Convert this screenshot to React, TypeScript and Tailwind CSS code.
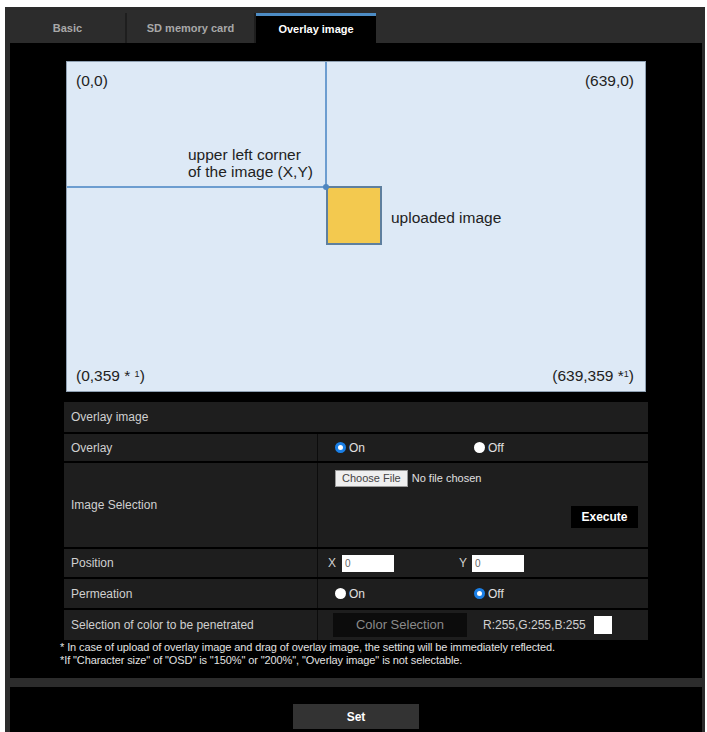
import React from 'react';

const font = { fontFamily: '"Liberation Sans", Arial, sans-serif' };

function Radio({ checked, label }: { checked: boolean; label: string }) {
  return (
    <span className="flex items-center gap-[3px] text-[12px] text-[#e0e0e0]">
      {checked ? (
        <span className="w-[11px] h-[11px] rounded-full bg-white border-[3px] border-[#1a7fe6]" />
      ) : (
        <span className="w-[11px] h-[11px] rounded-full bg-white" />
      )}
      <span>{label}</span>
    </span>
  );
}

function Row({ label, h, children }: { label: string; h: string; children: React.ReactNode }) {
  return (
    <div className={`flex ${h} border-t-2 border-black`}>
      <div className="w-[253px] flex items-center pl-[7px] text-[12px] text-[#d0d0d0]">{label}</div>
      <div className="flex-1 border-l border-[#0c0c0c] relative">{children}</div>
    </div>
  );
}

function Diagram() {
  return (
    <div className="relative mx-auto mt-[17px] w-[580px] h-[331px] bg-[#dde9f6] border border-[#8fa0b2] text-[15.5px] text-[#222]">
      <svg className="absolute inset-0" width="578" height="329">
        <line x1="259" y1="0" x2="259" y2="126" stroke="#6c9dd0" strokeWidth="2" />
        <line x1="0" y1="125" x2="259" y2="125" stroke="#6c9dd0" strokeWidth="2" />
        <rect x="260" y="125" width="54" height="57" fill="#f3c94f" stroke="#5e7f9e" strokeWidth="2" />
        <circle cx="259" cy="125" r="3" fill="#4f86c0" />
      </svg>
      <span className="absolute left-[9px] top-[7px]">(0,0)</span>
      <span className="absolute right-[11px] top-[7px]">(639,0)</span>
      <span className="absolute left-[121px] top-[84px] leading-[17px]">
        upper left corner
        <br />
        of the image (X,Y)
      </span>
      <span className="absolute left-[324px] top-[144px]">uploaded image</span>
      <span className="absolute left-[9px] top-[302px]">
        (0,359 * <sup className="text-[9px]">1</sup>)
      </span>
      <span className="absolute right-[11px] top-[302px]">
        (639,359 *<sup className="text-[9px]">1</sup>)
      </span>
    </div>
  );
}

export default function App() {
  return (
    <div className="min-h-screen bg-white pt-[7px] pl-[5px] pr-[2px]" style={font}>
      <div className="bg-[#2c2c2c] pl-[5px] pr-[3px] h-[725px] overflow-hidden">
        <div className="flex items-end h-[36px]">
          <div className="w-[117px] h-[30px] flex items-center justify-center text-[11px] font-bold text-[#a8a8a8] border-r-2 border-[#1e1e1e]">
            Basic
          </div>
          <div className="w-[129px] h-[30px] flex items-center justify-center text-[11px] font-bold text-[#a8a8a8] border-r-2 border-[#1e1e1e]">
            SD memory card
          </div>
          <div className="w-[120px] h-[30px] flex items-center justify-center text-[11px] font-bold text-white bg-black border-t-[3px] border-[#4d8cc4]">
            Overlay image
          </div>
        </div>

        <div className="bg-black h-[635px] pt-px">
          <Diagram />

          <div className="mx-auto mt-[10px] w-[584px] bg-[#1e1e1e]">
            <div className="h-[30px] flex items-center pl-[7px] text-[12px] text-[#d0d0d0]">Overlay image</div>
            <Row label="Overlay" h="h-[29px]">
              <div className="flex items-center h-full pl-[17px]">
                <div className="w-[139px]"><Radio checked label="On" /></div>
                <Radio checked={false} label="Off" />
              </div>
            </Row>
            <Row label="Image Selection" h="h-[86px]">
              <div className="flex items-center gap-[4px] pl-[17px] pt-[7px] text-[11px]">
                <span className="bg-[#efefef] text-[#444] border border-[#999] px-[6px] h-[17px] flex items-center">Choose File</span>
                <span className="text-[#e0e0e0]">No file chosen</span>
              </div>
              <div className="absolute right-[10px] bottom-[19px] bg-black text-white font-bold text-[12px] w-[67px] h-[22px] flex items-center justify-center">
                Execute
              </div>
            </Row>
            <Row label="Position" h="h-[30px]">
              <div className="flex items-center h-full pl-[10px] text-[12px] text-[#d0d0d0]">
                <span className="w-[14px]">X</span>
                <span className="w-[52px] h-[17px] bg-white text-[#666] text-[10px] pl-[3px] flex items-center">0</span>
                <span className="ml-[65px] w-[13px]">Y</span>
                <span className="w-[52px] h-[17px] bg-white text-[#666] text-[10px] pl-[3px] flex items-center">0</span>
              </div>
            </Row>
            <Row label="Permeation" h="h-[31px]">
              <div className="flex items-center h-full pl-[17px]">
                <div className="w-[139px]"><Radio checked={false} label="On" /></div>
                <Radio checked label="Off" />
              </div>
            </Row>
            <Row label="Selection of color to be penetrated" h="h-[32px]">
              <div className="flex items-center h-full pl-[15px] text-[12px] text-[#d0d0d0]">
                <span className="w-[134px] h-[24px] bg-[#0c0c0c] text-[#8a8a8a] text-[13px] flex items-center justify-center">
                  Color Selection
                </span>
                <span className="ml-[16px]">R:255,G:255,B:255</span>
                <span className="ml-[8px] w-[18px] h-[18px] bg-white" />
              </div>
            </Row>
          </div>

          <div className="mt-px pl-[50px] text-[11px] leading-[13px] tracking-[-0.1px] text-[#e2e2e2]">
            <div>* In case of upload of overlay image and drag of overlay image, the setting will be immediately reflected.</div>
            <div>*If "Character size" of "OSD" is "150%" or "200%", "Overlay image" is not selectable.</div>
          </div>
        </div>

        <div className="bg-black h-[60px] mt-[9px] pt-[17px]">
          <div className="mx-auto w-[126px] h-[25px] bg-[#333] text-white font-bold text-[12px] flex items-center justify-center">
            Set
          </div>
        </div>
      </div>
    </div>
  );
}
